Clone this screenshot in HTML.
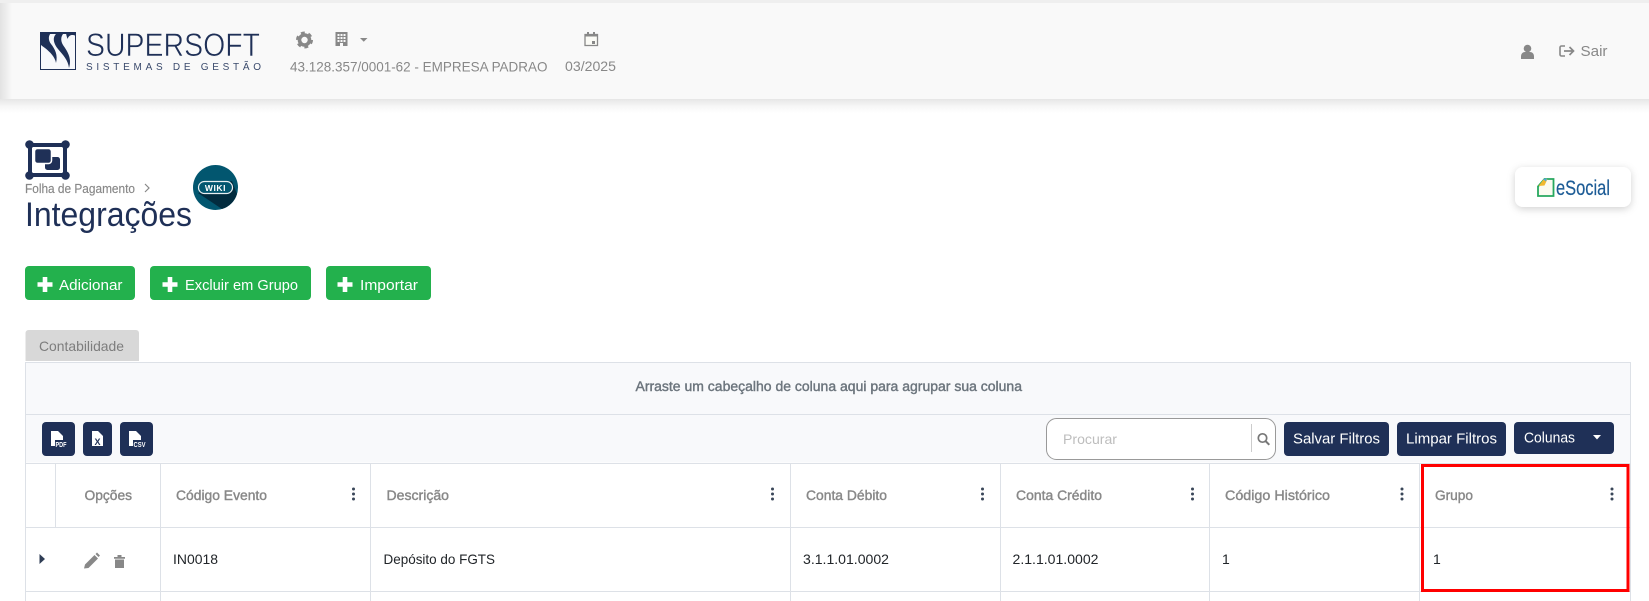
<!DOCTYPE html>
<html lang="pt-BR"><head><meta charset="utf-8"><title>Integrações</title>
<style>
html,body{margin:0;padding:0;background:#fff;width:1649px;height:601px;overflow:hidden}
svg{display:block}
text{font-family:"Liberation Sans",sans-serif;white-space:pre}
.m{stroke-width:.4px}
</style></head><body>
<svg width="1649" height="601" viewBox="0 0 1649 601" xmlns="http://www.w3.org/2000/svg">
<defs>
<linearGradient id="ls" x1="0" x2="1" y1="0" y2="0"><stop offset="0" stop-color="#e2e2e2"/><stop offset="1" stop-color="#f9f9f9"/></linearGradient>
<linearGradient id="sh" x1="0" x2="0" y1="0" y2="1"><stop offset="0" stop-color="#e6e6e6"/><stop offset=".5" stop-color="#f6f6f6"/><stop offset="1" stop-color="#fff"/></linearGradient>
<filter id="cs" x="-20%" y="-30%" width="140%" height="170%"><feDropShadow dx="0" dy="2" stdDeviation="4" flood-color="#000" flood-opacity=".18"/></filter>
</defs>
<rect width="1649" height="601" fill="#fff"/>
<!-- header -->
<rect y="0" width="1649" height="3" fill="#efefef"/>
<rect y="99" width="1649" height="14" fill="url(#sh)"/>
<rect y="3" width="1649" height="96" fill="#f9f9f9"/>
<rect y="3" width="12" height="96" fill="url(#ls)"/>
<!-- logo -->
<g transform="translate(40,32)">
<rect x=".5" y=".5" width="35" height="37" fill="#f7f8fb" stroke="#1f3057"/>
<path d="M0 0H35V2H0Z" fill="#1f3057"/>
<path d="M0 0H12C8 3 8 8 11 12C15 17 18 23 16 31C15 25 10 20 5 16C2 14 1 13 0 12Z" fill="#1f3057"/>
<path d="M14 0H25C21 3 20 8 23 13C28 20 32 27 29 36C28 28 23 23 18 17C14 12 12 6 16 2Z" fill="#1f3057"/>
<path d="M26 0H36V4C32 2 29 3 27.500 7C26.500 4 26 2 26 0Z" fill="#1f3057"/>
</g>
<text x="86" y="56" font-size="32.500" fill="#1f3057" stroke="#f9f9f9" stroke-width=".6" textLength="174" lengthAdjust="spacingAndGlyphs">SUPERSOFT</text>
<text x="86" y="70" font-size="10" fill="#3a4a6c" textLength="175" lengthAdjust="spacing">SISTEMAS DE GESTÃO</text>
<!-- gear -->
<g transform="translate(304.5,40)"><circle r="5" fill="none" stroke="#888" stroke-width="3.6"/><circle r="7.2" fill="none" stroke="#888" stroke-width="2.6" stroke-dasharray="3.8 3.74"/></g>
<!-- building -->
<path fill="#888" fill-rule="evenodd" d="M335.500 32h12v14h-4.500v-3h-3v3h-4.500zM337.500 34v2h2v-2zM340.500 34v2h2v-2zM343.500 34v2h2v-2zM337.500 37v2h2v-2zM340.500 37v2h2v-2zM343.500 37v2h2v-2zM337.500 40v2h2v-2zM340.500 40v2h2v-2zM343.500 40v2h2v-2z"/>
<path d="M360 38h7.500l-3.750 3.700z" fill="#888"/>
<text x="290" y="71.500" font-size="14" fill="#888" textLength="257.500" lengthAdjust="spacingAndGlyphs">43.128.357/0001-62 - EMPRESA PADRAO</text>
<!-- calendar -->
<path fill="#fbfbf6" stroke="#888" stroke-width="1.300" d="M585 34.500h12.500v11h-12.500z"/><path fill="#888" d="M584.500 34h13.500v2.500h-13.500zM587 32h2v3h-2zM593 32h2v3h-2zM592 41h3v3h-3z"/>
<text x="565" y="71" font-size="14" fill="#888" textLength="51" lengthAdjust="spacingAndGlyphs">03/2025</text>
<!-- user -->
<circle cx="1527.500" cy="48.500" r="3.800" fill="#888"/><path d="M1521 59v-2.500c0-3 2-4.500 4-4.500h5c2 0 4 1.500 4 4.500v2.500z" fill="#888"/>
<!-- logout -->
<path d="M1565 46h-3.500a1.500 1.500 0 0 0-1.500 1.500v7a1.500 1.500 0 0 0 1.500 1.500h3.500" fill="none" stroke="#888" stroke-width="1.600"/>
<path d="M1564 51h9M1569.500 47l4 4-4 4" fill="none" stroke="#888" stroke-width="1.700"/>
<text x="1580.500" y="56" font-size="14.500" fill="#888" textLength="27" lengthAdjust="spacingAndGlyphs">Sair</text>
<!-- page icon -->
<rect x="30" y="145" width="35" height="30" fill="#fff" stroke="#1f3057" stroke-width="4"/>
<circle cx="29.500" cy="144.500" r="4.300" fill="#1f3057"/><circle cx="65.500" cy="144.500" r="4.300" fill="#1f3057"/><circle cx="29.500" cy="175.500" r="4.300" fill="#1f3057"/><circle cx="65.500" cy="175.500" r="4.300" fill="#1f3057"/>
<rect x="45" y="157" width="15" height="13" rx="2.500" fill="#1f3057"/>
<rect x="34.500" y="148.500" width="17" height="15" rx="3" fill="#1f3057" stroke="#fff" stroke-width="1.500"/>
<text x="25" y="193" font-size="12.500" fill="#888" stroke="#888" stroke-width=".15" textLength="110" lengthAdjust="spacingAndGlyphs">Folha de Pagamento</text>
<path d="M145 184l4 4-4 4" fill="none" stroke="#888" stroke-width="1.200"/>
<text x="25" y="226" font-size="34" fill="#1f3057" textLength="167" lengthAdjust="spacingAndGlyphs">Integrações</text>
<!-- wiki -->
<circle cx="215.500" cy="187.500" r="22.500" fill="#02566f"/>
<path d="M198 193L232 181 237 194A22.500 22.500 0 0 1 222 209z" fill="#022b3e"/>
<rect x="198.500" y="181.500" width="34" height="12" rx="6" fill="#02566f" stroke="#e9eff2" stroke-width="1.200"/>
<text x="215.500" y="191" font-size="8.500" font-weight="bold" fill="#fff" text-anchor="middle" letter-spacing=".6">WIKI</text>
<!-- eSocial -->
<rect x="1515" y="167" width="116" height="40" rx="8" fill="#fff" filter="url(#cs)"/>
<path d="M1538 196v-9.500l6.500-7.500h9v17z" fill="#fbfbf0" stroke="#27a85f" stroke-width="1.800"/>
<path d="M1538.500 186l5-6.500 4-.5-3 6.500z" fill="#f1b92f"/>
<path d="M1543 179l4-.5-1 3z" fill="#4ba7e0"/>
<text x="1556" y="195" font-size="21" fill="#1d5c96" stroke="#1d5c96" stroke-width=".2" textLength="54" lengthAdjust="spacingAndGlyphs">eSocial</text>
<!-- green buttons -->
<g fill="#23b14d"><rect x="25" y="266" width="110" height="34" rx="4"/><rect x="150" y="266" width="161" height="34" rx="4"/><rect x="326" y="266" width="105" height="34" rx="4"/></g>
<path fill="#fff" d="M42.700 277h4.600v5.200h5.200v4.600h-5.200v5.200h-4.600v-5.200h-5.200v-4.600h5.200zM167.700 277h4.600v5.200h5.200v4.600h-5.200v5.200h-4.600v-5.200h-5.200v-4.600h5.200zM342.700 277h4.600v5.200h5.200v4.600h-5.200v5.200h-4.600v-5.200h-5.200v-4.600h5.200z"/>
<g font-size="14.500" fill="#fff">
<text x="59" y="290" textLength="63.500" lengthAdjust="spacingAndGlyphs">Adicionar</text>
<text x="185" y="290" textLength="113" lengthAdjust="spacingAndGlyphs">Excluir em Grupo</text>
<text x="360" y="290" textLength="58" lengthAdjust="spacingAndGlyphs">Importar</text>
</g>
<!-- tab -->
<path d="M25.500 361v-28a3 3 0 0 1 3-3h107.500a3 3 0 0 1 3 3v28z" fill="#d8d8d8"/>
<text x="39" y="351" font-size="14" fill="#7d7d7d" textLength="85" lengthAdjust="spacingAndGlyphs">Contabilidade</text>
<!-- grid -->
<rect x="25.500" y="362.500" width="1605" height="100" fill="#f8f9fb"/>
<g stroke="#dde1e7" stroke-width="1" fill="none">
<path d="M25.500 601V362.500H1630.500V601"/>
<path d="M25.500 414.500H1630.500"/>
<path d="M25.500 463.500H1630.500M25.500 527.500H1630.500M25.500 591.500H1630.500"/>
<path d="M55.500 463.500V527.500M160.500 463.500V601M370.500 463.500V601M790.500 463.500V601M1000.500 463.500V601M1209.500 463.500V601M1419.500 463.500V601"/>
</g>
<text x="635.500" y="391" font-size="13.500" fill="#6c757d" stroke="#6c757d" class="m" textLength="386.500" lengthAdjust="spacingAndGlyphs">Arraste um cabeçalho de coluna aqui para agrupar sua coluna</text>
<!-- export buttons -->
<g fill="#1f3057"><rect x="42" y="422" width="33" height="34" rx="4"/><rect x="83" y="422" width="29" height="34" rx="4"/><rect x="120" y="422" width="33" height="34" rx="4"/></g>
<g fill="#fff">
<path d="M51 431h7l5 5v10h-12z"/><path d="M92 431h6l5 5v10h-11z"/><path d="M129 431h7l5 5v10h-12z"/>
</g>
<g fill="#1f3057"><rect x="55" y="440" width="12" height="8"/><rect x="133" y="440" width="13" height="8"/></g>
<g font-size="7" font-weight="bold" fill="#fff"><text x="55.500" y="447" textLength="11" lengthAdjust="spacingAndGlyphs">PDF</text><text x="133.500" y="447" textLength="12" lengthAdjust="spacingAndGlyphs">CSV</text></g>
<text x="94.500" y="445" font-size="9" font-weight="bold" fill="#1f3057">X</text>
<!-- search -->
<rect x="1046.500" y="418.500" width="229" height="41" rx="10" fill="#fff" stroke="#999"/>
<text x="1063" y="444" font-size="14" fill="#bdbdbd" textLength="54" lengthAdjust="spacingAndGlyphs">Procurar</text>
<path d="M1251.500 424V452" stroke="#ccc"/>
<circle cx="1262.500" cy="438" r="4.200" fill="none" stroke="#777" stroke-width="1.700"/><path d="M1265.500 441l3.800 3.800" stroke="#777" stroke-width="2"/>
<!-- toolbar buttons -->
<g fill="#1f3057"><rect x="1284" y="422" width="105" height="34" rx="4"/><rect x="1397" y="422" width="109" height="34" rx="4"/><rect x="1514" y="422" width="100" height="32" rx="4"/></g>
<g font-size="14.500" fill="#fff">
<text x="1293" y="443.500" textLength="87" lengthAdjust="spacingAndGlyphs">Salvar Filtros</text>
<text x="1406" y="443.500" textLength="91" lengthAdjust="spacingAndGlyphs">Limpar Filtros</text>
<text x="1524" y="442.500" textLength="51" lengthAdjust="spacingAndGlyphs">Colunas</text>
</g>
<path d="M1593 435h8l-4 4.500z" fill="#fff"/>
<!-- table header -->
<g font-size="13.500" fill="#888" stroke="#888" class="m">
<text x="84.500" y="500" textLength="47.500" lengthAdjust="spacingAndGlyphs">Opções</text>
<text x="176" y="500" textLength="91" lengthAdjust="spacingAndGlyphs">Código Evento</text>
<text x="386.500" y="500" textLength="62.500" lengthAdjust="spacingAndGlyphs">Descrição</text>
<text x="806" y="500" textLength="81" lengthAdjust="spacingAndGlyphs">Conta Débito</text>
<text x="1016" y="500" textLength="86" lengthAdjust="spacingAndGlyphs">Conta Crédito</text>
<text x="1225" y="500" textLength="105" lengthAdjust="spacingAndGlyphs">Código Histórico</text>
<text x="1435" y="500" textLength="38" lengthAdjust="spacingAndGlyphs">Grupo</text>
</g>
<g fill="#3a4759">
<circle cx="353.500" cy="489" r="1.500"/><circle cx="353.500" cy="494" r="1.500"/><circle cx="353.500" cy="499" r="1.500"/>
<circle cx="772.500" cy="489" r="1.500"/><circle cx="772.500" cy="494" r="1.500"/><circle cx="772.500" cy="499" r="1.500"/>
<circle cx="982.500" cy="489" r="1.500"/><circle cx="982.500" cy="494" r="1.500"/><circle cx="982.500" cy="499" r="1.500"/>
<circle cx="1192.500" cy="489" r="1.500"/><circle cx="1192.500" cy="494" r="1.500"/><circle cx="1192.500" cy="499" r="1.500"/>
<circle cx="1402" cy="489" r="1.500"/><circle cx="1402" cy="494" r="1.500"/><circle cx="1402" cy="499" r="1.500"/>
<circle cx="1612" cy="489" r="1.500"/><circle cx="1612" cy="494" r="1.500"/><circle cx="1612" cy="499" r="1.500"/>
</g>
<!-- row -->
<path d="M39.500 554l5.500 5-5.500 5z" fill="#2f3d55"/>
<path d="M84 568.500l1-4 9.500-9.500 3.500 3.500-9.500 9.500zM95.500 554l1.500-1.500 3 3-1.500 1.500z" fill="#888"/>
<path d="M114 557h11v1.800h-11zM117.500 555h4v2h-4zM115 559.500h9v8.500h-9z" fill="#888"/>
<g font-size="14" fill="#212529">
<text x="173" y="564" textLength="45" lengthAdjust="spacingAndGlyphs">IN0018</text>
<text x="383.500" y="564" textLength="111.500" lengthAdjust="spacingAndGlyphs">Depósito do FGTS</text>
<text x="803" y="564" textLength="86" lengthAdjust="spacingAndGlyphs">3.1.1.01.0002</text>
<text x="1012.500" y="564" textLength="86" lengthAdjust="spacingAndGlyphs">2.1.1.01.0002</text>
<text x="1222" y="564">1</text>
<text x="1433" y="564">1</text>
</g>
<!-- highlight -->
<rect x="1422.500" y="465.500" width="205.500" height="125" fill="none" stroke="#f00" stroke-width="3"/>
</svg>
</body></html>
